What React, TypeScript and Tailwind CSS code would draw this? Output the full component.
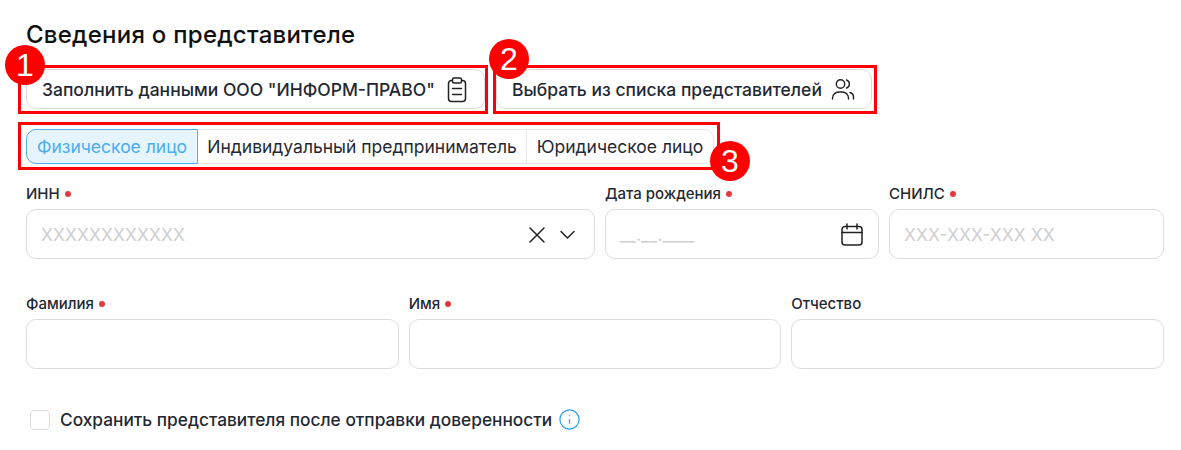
import { Info } from "lucide-react";

type FieldProps = {
	label: string;
	required?: boolean;
	placeholder?: string;
	children?: React.ReactNode;
};

function Field({ label, required, placeholder, children }: FieldProps) {
	return (
		<div>
			<div className="flex h-[20px] items-center gap-[5px] pt-px text-[15px] font-[450] leading-[20px] text-[#1f2933]">
				{label}
				{required && <span className="h-[6px] w-[6px] rounded-full bg-[#e5393d]" />}
			</div>
			<div className="mt-[6px] flex h-[50px] items-center justify-between rounded-[10px] border border-[#dcdcdc] bg-white pl-[14px]">
				<span className="pt-[2px] text-[17.6px] text-[#cfcfcf]">{placeholder}</span>
				{children}
			</div>
		</div>
	);
}

function Badge({ n, className }: { n: number; className: string }) {
	return (
		<span className={`absolute flex h-[40px] w-[40px] items-center justify-center rounded-full bg-[#fe0000] font-['Liberation_Sans',sans-serif] text-[32px] text-white ${className}`}>
			{n}
		</span>
	);
}

function ClipboardIcon() {
	return (
		<svg width="22" height="26" viewBox="0 0 22 26" fill="none" stroke="#222222" strokeWidth="1.5" strokeLinecap="round" className="mt-px">
			<rect x="2.5" y="3.5" width="17" height="21" rx="3" />
			<rect x="6.5" y="1" width="9" height="5" rx="1.5" fill="white" />
			<path d="M6.5 11.5h9M6.5 17.5h9" />
		</svg>
	);
}

function UsersIcon() {
	return (
		<svg width="24" height="24" viewBox="0 0 24 24" fill="none" stroke="#222222" strokeWidth="1.4" strokeLinecap="round" className="mt-px">
			<circle cx="9.5" cy="6" r="4.2" />
			<path d="M15.5 2a4.2 4.2 0 0 1 0 8" />
			<path d="M1.5 21v-1a6 6 0 0 1 6-6h4a6 6 0 0 1 6 6v1" />
			<path d="M19 14.5a5 5 0 0 1 3.5 5v1.5" />
		</svg>
	);
}

function ClearChevron() {
	return (
		<svg width="46" height="16" viewBox="0 0 46 16" fill="none" stroke="#222222" strokeWidth="1.5" strokeLinecap="round" strokeLinejoin="round" className="mr-[19px] mt-px">
			<path d="M1 1l14 14M15 1L1 15" />
			<path d="M32 4.5l6.5 6.5L45 4.5" />
		</svg>
	);
}

function CalendarIcon() {
	return (
		<svg width="22" height="23" viewBox="0 0 22 23" fill="none" stroke="#222222" strokeWidth="1.5" strokeLinecap="round" className="mr-[15px]">
			<rect x="1" y="3.5" width="20" height="18.5" rx="3" />
			<path d="M1 9.5h20M6 1v5M16 1v5" />
		</svg>
	);
}

export default function App() {
	return (
		<div className="h-[450px] w-[1181px] overflow-hidden bg-white pl-[26px] font-['Inter',sans-serif]">
			<h2 className="pt-[19px] text-[24px] font-[450] leading-[32px] tracking-[0.25px] text-[#111111]">Сведения о представителе</h2>

			<div className="relative -ml-[8px] mt-[14px] flex gap-[5px]">
				<div className="h-[49px] w-[470px] border-[3px] border-[#fe0000] pl-[5px] pt-px">
					<button className="flex h-[40px] w-full items-center justify-between rounded-[10px] border border-[#dcdcdc] bg-white pl-[15px] pr-[16px] text-[17.5px] font-[450] text-[#1f2933]">
						<span className="pt-[2px]">Заполнить данными ООО "ИНФОРМ-ПРАВО"</span>
						<ClipboardIcon />
					</button>
				</div>
				<div className="h-[49px] w-[384px] border-[3px] border-[#fe0000] pr-[2px] pt-px">
					<button className="flex h-[40px] w-full items-center justify-between rounded-[10px] border border-[#dcdcdc] bg-white pl-[15px] pr-[16px] text-[17.5px] font-[450] text-[#1f2933]">
						<span className="pt-[2px]">Выбрать из списка представителей</span>
						<UsersIcon />
					</button>
				</div>
				<Badge n={1} className="-left-[13px] -top-[20px]" />
				<Badge n={2} className="left-[471px] -top-[26px]" />
			</div>

			<div className="relative -ml-[8px] mt-[8px] h-[48px] w-[702px] border-[3px] border-[#fe0000] pl-[5px] pt-[4px]">
				<div className="flex h-[35px] w-[688px] rounded-[10px] border border-[#e6e6e6] text-[17.5px] text-[#1f2933]">
					<span className="-m-px flex w-[172px] items-center justify-center rounded-l-[10px] border border-[#52b0ee] bg-[#e6f4fe] pt-px text-[#4aaef0]">
						Физическое лицо
					</span>
					<span className="flex w-[330px] items-center justify-center border-r border-[#e6e6e6] pl-px pt-px">Индивидуальный предприниматель</span>
					<span className="flex flex-1 items-center justify-center pt-px">Юридическое лицо</span>
				</div>
				<Badge n={3} className="-right-[33px] top-[16px]" />
			</div>

			<div className="mt-[13px] grid w-[1138px] grid-cols-[569px_274px_275px] gap-[10px]">
				<Field label="ИНН" required placeholder="XXXXXXXXXXXX">
					<ClearChevron />
				</Field>
				<Field label="Дата рождения" required placeholder="__.__.____">
					<CalendarIcon />
				</Field>
				<Field label="СНИЛС" required placeholder="XXX-XXX-XXX XX" />
			</div>

			<div className="mt-[34px] grid w-[1138px] grid-cols-3 gap-[10px]">
				<Field label="Фамилия" required />
				<Field label="Имя" required />
				<Field label="Отчество" />
			</div>

			<label className="ml-[4px] mt-[38px] flex items-center text-[17.3px] font-[450] text-[#1f2933]">
				<span className="h-[20px] w-[20px] rounded-[5px] border border-[#dcdcdc] bg-white" />
				<span className="ml-[10px]">Сохранить представителя после отправки доверенности</span>
				<Info size={23} strokeWidth={1.25} className="ml-[6px] text-[#2fa0ee]" />
			</label>
		</div>
	);
}
